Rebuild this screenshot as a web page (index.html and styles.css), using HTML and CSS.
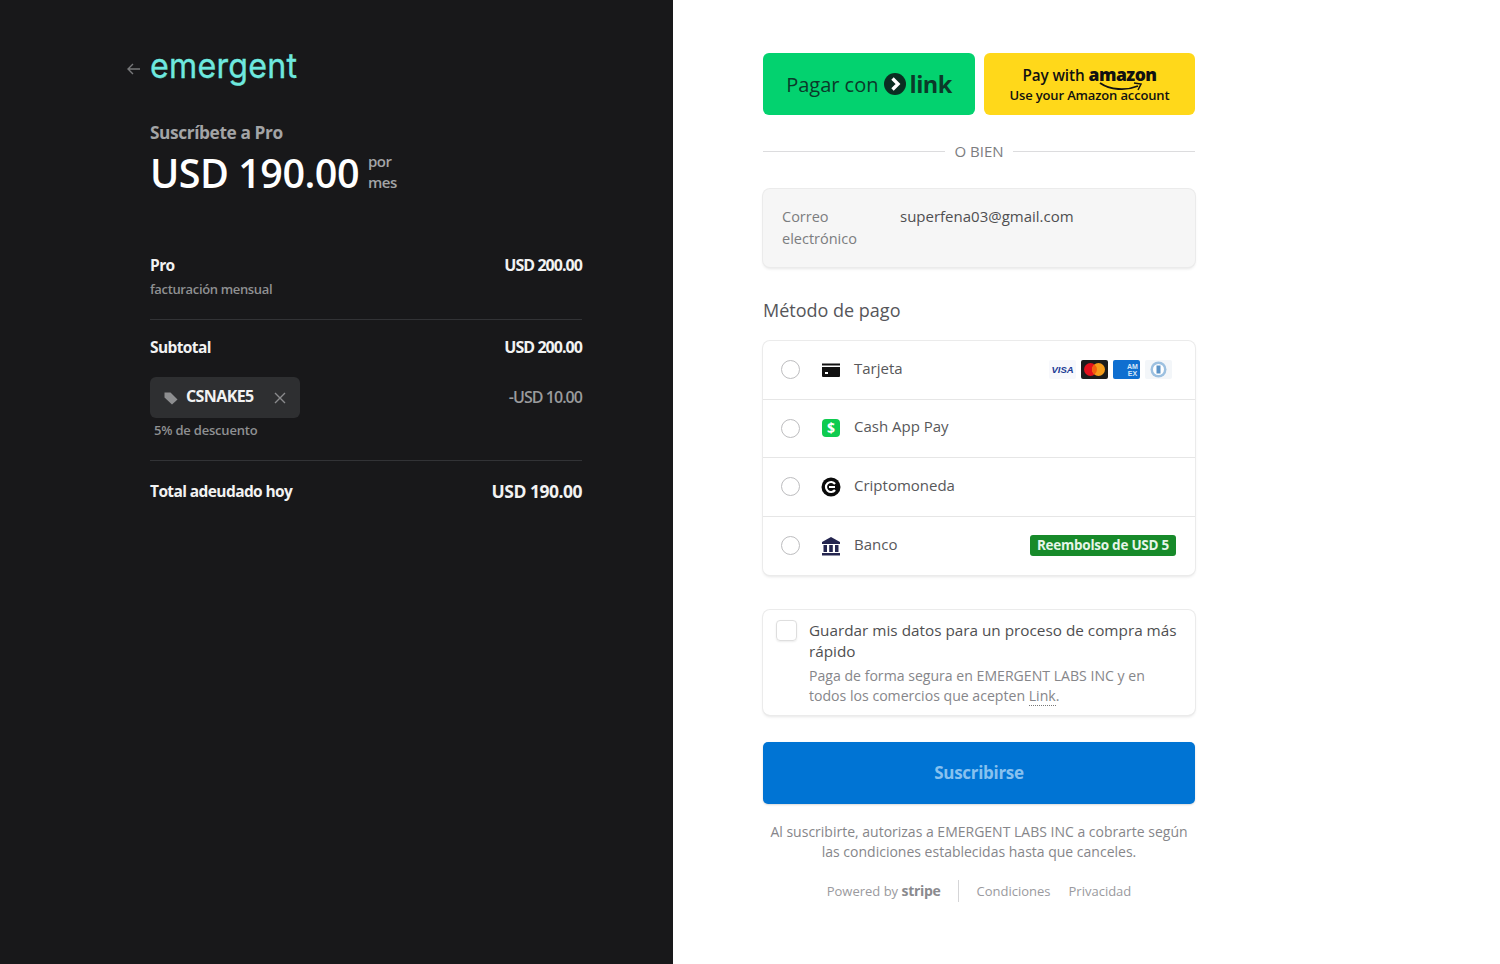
FILE: index.html
```html
<!DOCTYPE html>
<html lang="es">
<head>
<meta charset="utf-8">
<title>Suscríbete a Pro</title>
<link rel="stylesheet" href="styles.css">
</head>
<body>
<div class="page">
  <div class="summary">
    <div class="brand">
      <svg class="back" width="14" height="12" viewBox="0 0 14 12"><path d="M6 1L1 6l5 5M1 6h12" fill="none" stroke="#77787a" stroke-width="1.4"/></svg>
      <span class="logo">emergent</span>
    </div>
    <div class="sub-title">Suscríbete a Pro</div>
    <div class="price-row">
      <span class="price">USD 190.00</span>
      <span class="per">por<br>mes</span>
    </div>
    <div class="line first">
      <span class="strong">Pro</span>
      <span class="strong tight">USD 200.00</span>
    </div>
    <div class="note">facturación mensual</div>
    <hr class="rule">
    <div class="line">
      <span class="strong">Subtotal</span>
      <span class="strong tight">USD 200.00</span>
    </div>
    <div class="line promo-row">
      <span class="promo">
        <svg width="16" height="16" viewBox="0 0 16 16"><path d="M1.5 2.5h6l7 7-5.5 5-7.5-7z" fill="#8d8e90"/></svg>
        <span class="promo-code">CSNAKE5</span>
        <svg class="promo-x" width="12" height="12" viewBox="0 0 12 12"><path d="M1 1l10 10M11 1L1 11" stroke="#8a8b8d" stroke-width="1.4"/></svg>
      </span>
      <span class="discount tight">-USD 10.00</span>
    </div>
    <div class="note off">5% de descuento</div>
    <hr class="rule">
    <div class="line">
      <span class="strong">Total adeudado hoy</span>
      <span class="strong total">USD 190.00</span>
    </div>
  </div>

  <div class="checkout">
    <div class="express">
      <div class="btn-link">
        <span>Pagar con</span>
        <svg width="22" height="22" viewBox="0 0 22 22"><circle cx="11" cy="11" r="11" fill="#0b2e22"/><path d="M8.5 5.5L14 11l-5.500 5.500" fill="none" stroke="#fff" stroke-width="3.400"/></svg>
        <b>link</b>
      </div>
      <div class="btn-amazon">
        <div class="amz-top">Pay with <b>amazon</b></div>
        <svg class="smile" width="46" height="9" viewBox="0 0 46 9"><path d="M1 1c10 7 26 8 38 3" fill="none" stroke="#111" stroke-width="1.800"/><path d="M35 1l7 1-3 6" fill="none" stroke="#111" stroke-width="1.500"/></svg>
        <div class="amz-sub">Use your Amazon account</div>
      </div>
    </div>
    <div class="divider"><span>O BIEN</span></div>

    <div class="email">
      <span class="email-label">Correo electrónico</span>
      <span class="email-value">superfena03@gmail.com</span>
    </div>

    <h2 class="method-title">Método de pago</h2>
    <div class="methods">
      <div class="method">
        <span class="radio"></span>
        <svg class="m-icon" width="20" height="20" viewBox="0 0 20 20"><path d="M1 3.500h18v2H1z" fill="#111"/><path d="M1 7h18v9a1 1 0 0 1-1 1H2a1 1 0 0 1-1-1z" fill="#111"/><rect x="4" y="12" width="3" height="2" fill="#fff"/></svg>
        <span class="m-label">Tarjeta</span>
        <span class="cards">
          <svg width="27" height="19" viewBox="0 0 27 19"><rect width="27" height="19" rx="2" fill="#f7f8fc"/><text x="13.500" y="13" text-anchor="middle" class="visa">VISA</text></svg>
          <svg width="27" height="19" viewBox="0 0 27 19"><rect width="27" height="19" rx="2" fill="#1c1c1c"/><circle cx="9.500" cy="9.500" r="6.500" fill="#e3101c"/><circle cx="17.500" cy="9.500" r="6.500" fill="#f59c1a"/><path d="M13.500 4.400a6.500 6.500 0 0 1 0 10.200 6.500 6.500 0 0 1 0-10.200z" fill="#f2610f"/></svg>
          <svg width="27" height="19" viewBox="0 0 27 19"><rect width="27" height="19" rx="2" fill="#0f6fd0"/><text x="19.500" y="9" text-anchor="middle" class="amex">AM</text><text x="19.500" y="16" text-anchor="middle" class="amex">EX</text></svg>
          <svg width="27" height="19" viewBox="0 0 27 19"><rect width="27" height="19" rx="2" fill="#f3f6f9"/><circle cx="13.500" cy="9.500" r="8" fill="#9cc0e0"/><circle cx="13.500" cy="9.500" r="5.500" fill="#fff"/><rect x="11.500" y="5.500" width="4" height="8" fill="#5b93c7"/></svg>
        </span>
      </div>
      <div class="method">
        <span class="radio"></span>
        <svg class="m-icon" width="20" height="20" viewBox="0 0 20 20"><rect x="1" y="1" width="18" height="18" rx="4" fill="#0ecb4f"/><text x="10" y="15" text-anchor="middle" class="cash">$</text></svg>
        <span class="m-label">Cash App Pay</span>
      </div>
      <div class="method">
        <span class="radio"></span>
        <svg class="m-icon" width="20" height="20" viewBox="0 0 20 20"><circle cx="10" cy="10" r="9.500" fill="#0a0a0a"/><path d="M14 7a5 5 0 1 0 0 6" fill="none" stroke="#fff" stroke-width="2.200"/><path d="M8 10h6" stroke="#fff" stroke-width="2"/></svg>
        <span class="m-label">Criptomoneda</span>
      </div>
      <div class="method">
        <span class="radio"></span>
        <svg class="m-icon" width="20" height="20" viewBox="0 0 20 20"><path d="M10 1l9 5v2H1V6z" fill="#24254f"/><path d="M2.500 9h3.500v7H2.500zM8.200 9h3.600v7H8.200zM14 9h3.500v7H14zM1 17h18v2.500H1z" fill="#24254f"/></svg>
        <span class="m-label">Banco</span>
        <span class="badge">Reembolso de USD 5</span>
      </div>
    </div>

    <div class="save">
      <span class="check"></span>
      <div class="save-text">
        <div class="save-title">Guardar mis datos para un proceso de compra más rápido</div>
        <div class="save-note">Paga de forma segura en EMERGENT LABS INC y en todos los comercios que acepten <span class="dotted">Link</span>.</div>
      </div>
    </div>

    <div class="pay-btn">Suscribirse</div>
    <p class="terms">Al suscribirte, autorizas a EMERGENT LABS INC a cobrarte según las condiciones establecidas hasta que canceles.</p>
    <div class="foot">
      <span class="powered">Powered by <b>stripe</b></span>
      <span class="foot-links"><span>Condiciones</span><span>Privacidad</span></span>
    </div>
  </div>
</div>
</body>
</html>
```

FILE: styles.css
```css
*
{
    box-sizing: border-box;
}
body
{
    margin: 0;
    background: #fff;
    font-family: "Open Sans", "Liberation Sans", sans-serif;
    overflow: hidden;
}
.page
{
    display: flex;
    height: 964px;
}
.summary
{
    width: 673px;
    padding: 46px 91px 0 150px;
    background: #18181a;
    color: #f2f2f2;
}
.brand
{
    display: flex;
    align-items: center;
    height: 40px;
    margin-left: -23px;
}
.back
{
    margin: 6px 9px 0 0;
}
.logo
{
    color: #6ee8df;
    font-family: "Inter", sans-serif;
    font-size: 29px;
    line-height: 40px;
    letter-spacing: 0.2px;
    -webkit-text-stroke: 0.3px #6ee8df;
    transform: scale(1.11, 1.2);
    transform-origin: left center;
}
.sub-title
{
    margin-top: 35px;
    color: #a3a4a6;
    font-size: 17.300px;
    font-weight: 700;
    line-height: 24px;
    letter-spacing: -0.4px;
}
.price-row
{
    display: flex;
    align-items: center;
    gap: 9px;
    margin-top: 3px;
}
.price
{
    color: #fff;
    font-size: 39.500px;
    font-weight: 600;
    line-height: 50px;
    letter-spacing: -0.5px;
}
.per
{
    margin-bottom: 3px;
    color: #a3a4a6;
    font-size: 15px;
    font-weight: 600;
    line-height: 21px;
    letter-spacing: -0.5px;
}
.line
{
    display: flex;
    justify-content: space-between;
    align-items: center;
    font-size: 15.500px;
    line-height: 24px;
}
.first
{
    margin-top: 55px;
}
.strong
{
    font-weight: 700;
    letter-spacing: -0.6px;
}
.tight
{
    font-size: 16px;
    letter-spacing: -0.95px;
}
.total
{
    font-size: 17.500px;
    letter-spacing: -0.5px;
}
.note
{
    margin-top: 2px;
    color: #8f9092;
    font-size: 13px;
    font-weight: 600;
    line-height: 20px;
    letter-spacing: -0.35px;
}
.rule
{
    height: 1px;
    margin: 20px 0 15px;
    border: 0;
    background: #323336;
}
.promo-row
{
    margin-top: 18px;
}
.promo
{
    display: flex;
    align-items: center;
    width: 150px;
    height: 41px;
    padding: 0 14px 0 13px;
    border-radius: 6px;
    background: #2e2f31;
}
.promo-code
{
    margin: -3px 0 0 7px;
    font-size: 16px;
    font-weight: 700;
    letter-spacing: -0.6px;
}
.promo-x
{
    margin-left: auto;
}
.discount
{
    margin-bottom: 2px;
    color: #9a9b9d;
    font-weight: 600;
}
.off
{
    margin: 2px 0 0 4px;
    letter-spacing: -0.2px;
}
.off + .rule
{
    margin-top: 20px;
    margin-bottom: 18px;
}
.checkout
{
    width: 432px;
    margin-left: 90px;
    padding-top: 53px;
    color: #4a4a4c;
}
.express
{
    display: flex;
    gap: 9px;
    height: 62px;
}
.btn-link
{
    display: flex;
    align-items: center;
    justify-content: center;
    gap: 4px;
    width: 212px;
    border-radius: 6px;
    background: #03d26f;
    color: #0b3a2a;
    font-size: 20px;
}
.btn-link b
{
    font-size: 23.500px;
    font-weight: 700;
    line-height: 30px;
    letter-spacing: -0.5px;
}
.btn-link svg
{
    margin-left: 1px;
}
.btn-amazon
{
    display: flex;
    flex-direction: column;
    align-items: center;
    justify-content: center;
    width: 211px;
    border-radius: 6px;
    background: #ffd81a;
    color: #111;
    font-weight: 600;
}
.amz-top
{
    font-size: 15.300px;
    line-height: 20px;
    letter-spacing: -0.1px;
}
.amz-top b
{
    font-size: 17.500px;
    letter-spacing: -0.5px;
}
.smile
{
    margin: -3px 0 -5px 64px;
}
.amz-sub
{
    font-size: 13px;
    line-height: 18px;
    letter-spacing: -0.15px;
}
.divider
{
    display: flex;
    align-items: center;
    gap: 9px;
    height: 20px;
    margin-top: 26px;
    color: #7c7d7f;
    font-size: 15px;
}
.divider::before,
.divider::after
{
    content: "";
    flex: 1;
    height: 1px;
    background: #dcdcde;
}
.email
{
    display: flex;
    height: 78px;
    margin-top: 28px;
    padding: 17px 19px;
    border-radius: 7px;
    background: #f6f6f6;
    box-shadow: 0 0 0 1px #ebebeb, 0 2px 3px rgba(0, 0, 0, 0.1);
    font-size: 14.500px;
    line-height: 22px;
}
.email-label
{
    width: 118px;
    color: #7c7d7f;
    padding-right: 30px;
}
.email-value
{
    margin-top: -1px;
    color: #4f4f51;
    font-size: 15px;
}
.method-title
{
    margin: 31px 0 19px;
    color: #56565a;
    font-size: 18px;
    font-weight: 400;
    line-height: 24px;
}
.methods
{
    height: 234px;
    border-radius: 7px;
    background: #fff;
    box-shadow: 0 0 0 1px #ebebeb, 0 2px 3px rgba(0, 0, 0, 0.1);
}
.method
{
    display: flex;
    align-items: center;
    height: 58.500px;
    padding: 0 19px 0 18px;
    border-bottom: 1px solid #e6e6e6;
}
.method:last-child
{
    border-bottom: 0;
}
.radio
{
    width: 19px;
    height: 19px;
    border: 1.500px solid #bdbdbf;
    border-radius: 50%;
}
.m-icon
{
    margin-left: 21px;
}
.m-label
{
    margin-left: 13px;
    color: #58585a;
    font-size: 15px;
    position: relative;
    top: -2px;
}
.cards
{
    display: flex;
    gap: 5px;
    margin-left: auto;
    margin-right: 4px;
}
.visa
{
    fill: #1a3a94;
    font-family: "Liberation Sans", sans-serif;
    font-size: 9.500px;
    font-weight: 700;
    font-style: italic;
}
.amex
{
    fill: #d5e7f8;
    font-family: "Liberation Sans", sans-serif;
    font-size: 7px;
    font-weight: 700;
}
.cash
{
    fill: #fff;
    font-family: "Open Sans", sans-serif;
    font-size: 14px;
    font-weight: 700;
}
.badge
{
    margin-left: auto;
    padding: 0 7px;
    border-radius: 3px;
    background: #178a2a;
    color: #e6f5e8;
    font-size: 13.500px;
    font-weight: 700;
    line-height: 21px;
    letter-spacing: -0.25px;
}
.save
{
    display: flex;
    height: 105px;
    margin-top: 35px;
    padding: 10px 13px;
    border-radius: 7px;
    box-shadow: 0 0 0 1px #ebebeb, 0 2px 3px rgba(0, 0, 0, 0.1);
}
.check
{
    flex: none;
    width: 21px;
    height: 21px;
    border: 1px solid #dedede;
    border-radius: 4px;
    box-shadow: 0 1px 2px rgba(0, 0, 0, 0.08);
}
.save-text
{
    margin-left: 12px;
}
.save-title
{
    color: #4f4f51;
    font-size: 15.300px;
    line-height: 21px;
}
.save-note
{
    margin-top: 4px;
    margin-right: 14px;
    color: #86868a;
    font-size: 14.100px;
    line-height: 20px;
}
.dotted
{
    border-bottom: 1px dotted #777;
}
.pay-btn
{
    height: 62px;
    margin-top: 27px;
    border-radius: 5px;
    background: #0074d4;
    color: #87c1ef;
    font-size: 17px;
    font-weight: 700;
    line-height: 62px;
    text-align: center;
    letter-spacing: -0.3px;
    box-shadow: 0 1px 2px rgba(0, 0, 0, 0.15);
}
.terms
{
    margin: 18px 0 0;
    color: #86868a;
    font-size: 14px;
    line-height: 20px;
    text-align: center;
}
.foot
{
    display: flex;
    justify-content: center;
    align-items: center;
    height: 22px;
    margin-top: 18px;
    color: #9a9a9e;
    font-size: 13px;
}
.powered
{
    padding-right: 17px;
    border-right: 1px solid #d5d5d7;
    line-height: 22px;
}
.powered b
{
    color: #8a8a8e;
    font-size: 14px;
    letter-spacing: -0.3px;
}
.foot-links
{
    display: flex;
    gap: 18px;
    margin-left: 18px;
}
```
